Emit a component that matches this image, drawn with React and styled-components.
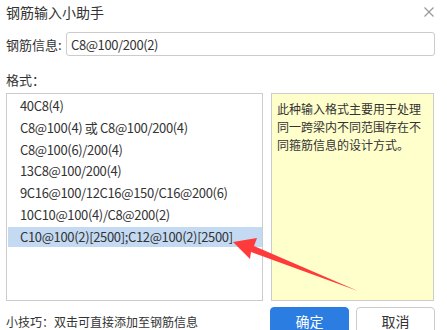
import React, { useState } from 'react'
import styled, { createGlobalStyle } from 'styled-components'

const GlobalStyle = createGlobalStyle`
    * { box-sizing: border-box; margin: 0; padding: 0; }
    body {
        margin: 0;
        background: #fff;
        font-family: "Microsoft YaHei", "Noto Sans CJK SC", sans-serif;
        color: #333;
    }
`

const formats = [
    '40C8(4)',
    'C8@100(4) 或 C8@100/200(4)',
    'C8@100(6)/200(4)',
    '13C8@100/200(4)',
    '9C16@100/12C16@150/C16@200(6)',
    '10C10@100(4)/C8@200(2)',
    'C10@100(2)[2500];C12@100(2)[2500]',
]

function App() {
    const [selected, setSelected] = useState(6)

    return (
        <Dialog>
            <GlobalStyle />
            <Header>
                <h1 className='title'>钢筋输入小助手</h1>
                <CloseIcon viewBox="0 0 10 10">
                    <path d="M0.5 0.5 L9.5 9.5 M9.5 0.5 L0.5 9.5" />
                </CloseIcon>
            </Header>

            <FieldRow>
                <span className='label'>钢筋信息:</span>
                <Input defaultValue="C8@100/200(2)" />
            </FieldRow>

            <SectionLabel>格式：</SectionLabel>

            <Content>
                <List>
                    {formats.map((item, index) => (
                        <Item
                            key={index}
                            $active={index === selected}
                            onClick={() => setSelected(index)}
                        >
                            {item}
                        </Item>
                    ))}
                </List>
                <Note>此种输入格式主要用于处理同一跨梁内不同范围存在不同箍筋信息的设计方式。</Note>

                {/* callout arrow pointing at the selected format */}
                <Arrow viewBox="0 0 447 330">
                    <polygon points="233,242 257,238 254,246 358,291 251,252 250,259" />
                </Arrow>
            </Content>

            <Footer>
                <span className='tip'>小技巧：双击可直接添加至钢筋信息</span>
                <div className="buttons">
                    <Button $primary>确定</Button>
                    <Button>取消</Button>
                </div>
            </Footer>
        </Dialog>
    )
}

export default App

const Dialog = styled.div`
    width: 447px;
    height: 330px;
    overflow: hidden;
    position: relative;
`

const Header = styled.div`
    height: 24px;
    padding: 0 13px 0 6px;
    display: flex;
    align-items: center;
    justify-content: space-between;

    .title {
        font-size: 14px;
        font-weight: 400;
        color: #333;
    }
`

const CloseIcon = styled.svg`
    width: 10px;
    height: 10px;
    stroke: #999;
    stroke-width: 1.2;
    fill: none;
`

const FieldRow = styled.div`
    margin-top: 8px;
    height: 24px;
    padding: 0 12px 0 6px;
    display: flex;
    align-items: center;

    .label {
        width: 60px;
        font-size: 13px;
        color: #333;
    }
`

const Input = styled.input`
    flex: 1;
    height: 24px;
    border: 1px solid #ccc;
    border-radius: 3px;
    padding: 0 4px;
    font-family: "Microsoft YaHei", "Noto Sans CJK SC", sans-serif;
    font-size: 13px;
    letter-spacing: -0.4px;
    color: #333;
    outline: none;
`

const SectionLabel = styled.div`
    margin-top: 14px;
    height: 20px;
    line-height: 20px;
    padding-left: 6px;
    font-size: 13px;
`

const Content = styled.div`
    margin-top: 3px;
    height: 208px;
    padding: 0 13px 0 6px;
    display: flex;
    gap: 8px;
`

const List = styled.ul`
    width: 257px;
    border: 1px solid #ccc;
    list-style: none;
    padding: 2px 0 0 1px;
    display: flex;
    flex-direction: column;
    gap: 1.8px;
`

const Item = styled.li`
    height: 20px;
    line-height: 20px;
    padding-left: 12px;
    font-size: 13px;
    letter-spacing: -0.35px;
    color: #333;
    white-space: nowrap;
    cursor: default;
    background: ${p => (p.$active ? '#c3daf2' : 'transparent')};
`

const Note = styled.div`
    flex: 1;
    background: #ffffcc;
    border: 1px solid #ccc;
    padding: 6px 5px;
    font-size: 12px;
    line-height: 18px;
    color: #333;
`

const Arrow = styled.svg`
    position: absolute;
    left: 0;
    top: 0;
    width: 447px;
    height: 330px;
    pointer-events: none;
    fill: #ff3a3a;
`

const Footer = styled.div`
    margin-top: 6px;
    padding: 0 12px 0 6px;
    display: flex;
    align-items: center;
    justify-content: space-between;

    .tip {
        font-size: 12px;
        color: #333;
    }

    .buttons {
        display: flex;
        gap: 7px;
    }
`

const Button = styled.button`
    width: 79px;
    height: 28px;
    border-radius: 4px;
    font-family: "Microsoft YaHei", "Noto Sans CJK SC", sans-serif;
    font-size: 14px;
    border: 1px solid ${p => (p.$primary ? '#2b7de1' : '#ccc')};
    background: ${p => (p.$primary ? '#2b7de1' : '#fff')};
    color: ${p => (p.$primary ? '#fff' : '#333')};
`
